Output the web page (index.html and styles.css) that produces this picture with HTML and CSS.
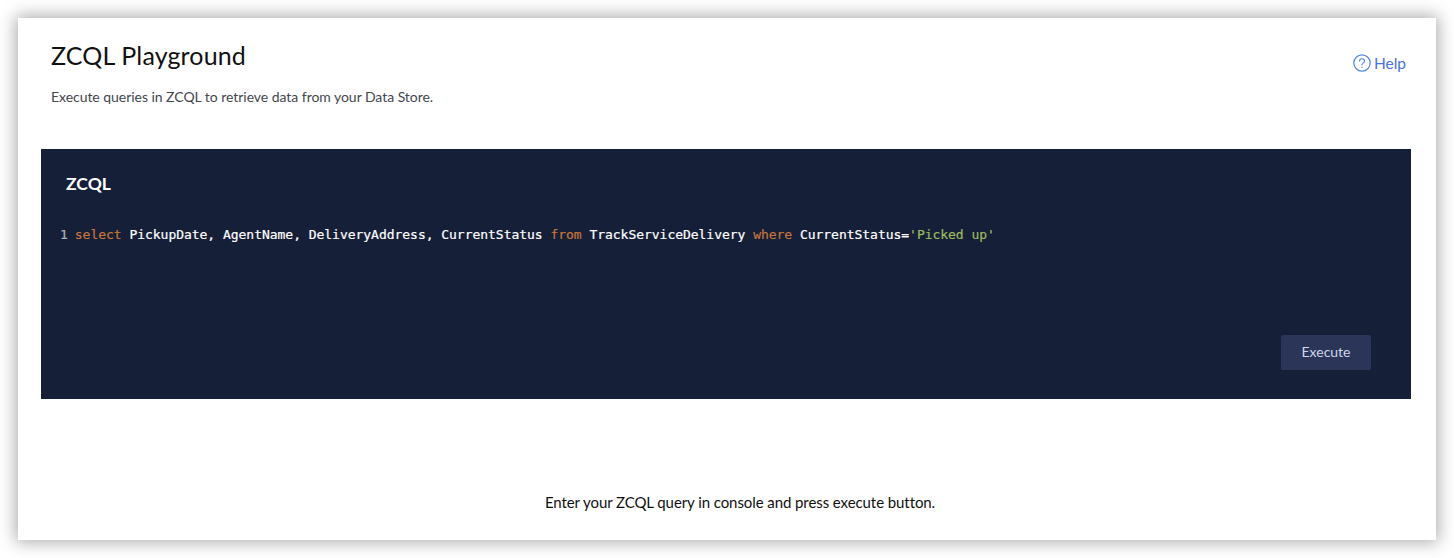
FILE: index.html
```html
<!DOCTYPE html>
<html lang="en">
<head>
<meta charset="utf-8">
<title>ZCQL Playground</title>
<link rel="stylesheet" href="styles.css">
</head>
<body>
<main class="card">
  <header class="head">
    <div class="head-text">
      <h1 class="title">ZCQL Playground</h1>
      <p class="subtitle">Execute queries in ZCQL to retrieve data from your Data Store.</p>
    </div>
    <a class="help">
      <svg class="help-icon" viewBox="0 0 18 18" width="18" height="18" fill="none" stroke="currentColor">
        <circle cx="9" cy="9" r="8.2" stroke-width="1.2"/>
        <path d="M6.5 7.1c0-1.5 1.1-2.4 2.5-2.4s2.5.9 2.5 2.3c0 1.9-2.5 1.9-2.5 3.9" stroke-width="1.1" stroke-linecap="round"/>
        <circle cx="9" cy="13.3" r=".7" fill="currentColor" stroke="none"/>
      </svg>
      <span>Help</span>
    </a>
  </header>
  <section class="console">
    <h2 class="console-title">ZCQL</h2>
    <div class="code-line"><span class="line-no">1</span><code class="code"><span class="kw">select</span> PickupDate, AgentName, DeliveryAddress, CurrentStatus <span class="kw">from</span> TrackServiceDelivery <span class="kw">where</span> CurrentStatus=<span class="str">'Picked up'</span></code></div>
    <div class="actions"><button class="execute" type="button">Execute</button></div>
  </section>
  <p class="hint">Enter your ZCQL query in console and press execute button.</p>
</main>
</body>
</html>
```
FILE: styles.css
```css
html, body { margin: 0; padding: 0; background: #fff; }
body { width: 1454px; height: 558px; padding: 18px; box-sizing: border-box; overflow: hidden; font-family: "Lato", sans-serif; }
.card { width: 1418px; height: 522px; background: #fff; box-shadow: 0 0 16px 2px rgba(0,0,0,.34); display: flex; flex-direction: column; padding: 0 25px 0 23px; box-sizing: border-box; }
.head { display: flex; justify-content: space-between; height: 131px; padding-left: 10px; box-sizing: border-box; }
.head-text { padding-top: 22px; }
.title { margin: 0; font-family: "Lato", sans-serif; font-weight: 400; font-size: 25px; line-height: 30px; color: #111; letter-spacing: .15px; }
.subtitle { margin: 18px 0 0; font-size: 14px; line-height: 18px; color: #44464f; letter-spacing: -.04px; }
.help { display: flex; align-items: center; gap: 3px; height: 20px; margin-top: 35px; margin-right: 5px; color: #4a72e0; font-size: 15.5px; }
.help-icon { color: #4f86e8; }
.console { height: 250px; background: #161f38; display: flex; flex-direction: column; padding: 0 40px 29px 0; box-sizing: border-box; }
.console-title { margin: 25px 0 0 25px; font-family: "Lato", sans-serif; font-weight: 700; font-size: 17.5px; line-height: 20px; color: #fff; }
.code-line { margin: 31px 0 0 19px; display: flex; gap: 7px; font-family: "DejaVu Sans Mono", monospace; font-size: 13px; line-height: 20px; color: #fff; -webkit-text-stroke: .2px currentColor; }
.line-no { color: #aab0bd; }
.code { font-family: inherit; letter-spacing: -.03px; white-space: pre; font-weight: 400; }
.kw { color: #c5763a; }
.str { color: #9dbb5c; }
.actions { margin-top: auto; display: flex; justify-content: flex-end; }
.execute { width: 90px; height: 35px; border: 0; border-radius: 2px; background: #2a3558; color: #d0d6ec; font-family: "Lato", sans-serif; font-size: 14px; padding: 0 0 2px; }
.hint { margin: 93px 0 0; padding-left: 28px; text-align: center; font-size: 15px; letter-spacing: -.08px; line-height: 20px; color: #111; }
```
